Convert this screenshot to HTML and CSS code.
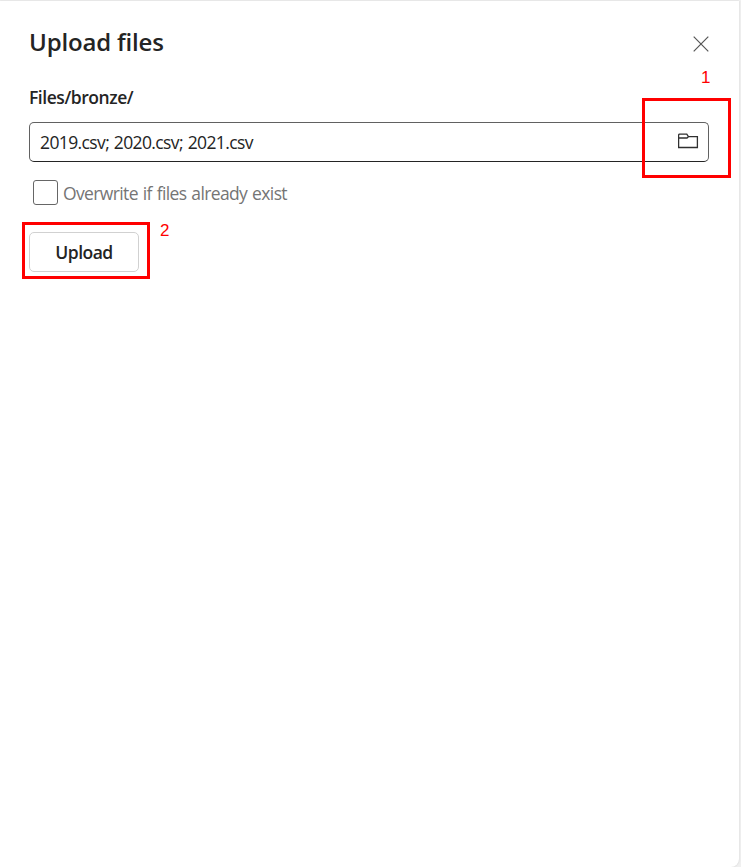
FILE: index.html
```html
<!DOCTYPE html>
<html lang="en">
<head>
<meta charset="utf-8">
<title>Upload files</title>
<link rel="stylesheet" href="styles.css">
</head>
<body>
<main class="panel">
  <header class="header">
    <h1 class="title">Upload files</h1>
    <button class="close" aria-label="Close">
      <svg width="16" height="16" viewBox="0 0 16 16"><path d="M.7.7l14.6 14.6M15.3.7L.7 15.3"/></svg>
    </button>
  </header>
  <div class="path"><span>Files/bronze/</span></div>
  <div class="field">
    <span class="value">2019.csv; 2020.csv; 2021.csv</span>
    <svg class="folder" width="21" height="16" viewBox="0 0 21 16"><path d="M.6 14.5V2.2Q.6 1.2 1.6 1.2H8.8L10.4 3.7H19.4V14.5zM.6 5H9L10.4 3.7"/></svg>
    <span class="mark mark-browse"></span>
    <span class="step step-browse">1</span>
  </div>
  <label class="option"><span class="box"></span><span class="option-text">Overwrite if files already exist</span></label>
  <div class="actions">
    <button class="upload"><span>Upload</span></button>
    <span class="mark mark-upload"></span>
    <span class="step step-upload">2</span>
  </div>
</main>
</body>
</html>
```

FILE: styles.css
```css
* { box-sizing: border-box; }
body {
  margin: 0;
  height: 867px;
  overflow: hidden;
  background: #f0f0f0;
  font-family: "Open Sans", "Noto Sans", sans-serif;
  color: #242424;
}
.panel {
  width: 739px;
  height: 866px;
  margin-top: 1px;
  padding: 21px 30px 0 29px;
  background: #fff;
  border-radius: 0 0 8px 0;
  box-shadow: 0 0 2px #ccc;
}
.header { display: flex; justify-content: space-between; height: 44px; }
.title { margin: 0; font-size: 24px; line-height: 40px; font-weight: 600; letter-spacing: -0.17px; white-space: nowrap; }
.close { width: 16px; height: 16px; margin: 14px 0 0; padding: 0; border: 0; background: none; }
.close svg { display: block; fill: none; stroke: #555; stroke-width: 1.2; }
.path { height: 56px; padding-top: 19px; font-size: 17.5px; line-height: 24px; font-weight: 600; letter-spacing: -0.45px; }
.field {
  position: relative;
  display: flex;
  align-items: center;
  justify-content: space-between;
  height: 40px;
  padding: 0 9px 0 10px;
  border: 1px solid #616161;
  border-bottom-color: #242424;
  border-radius: 5px;
  font-size: 17.5px;
}
.value { letter-spacing: -0.62px; word-spacing: 0.8px; }
.folder { margin-top: -3px; fill: none; stroke: #303030; stroke-width: 1.3; }
.mark { position: absolute; border: 3px solid #f00; }
.mark-browse { left: 612px; top: -25px; width: 89px; height: 80px; }
.step { position: absolute; color: #f00; font: 17px/20px "Liberation Sans", Arial, sans-serif; }
.step-browse { left: 671px; top: -55px; }
.option { display: flex; align-items: center; gap: 5px; height: 26px; margin: 17px 0 27px 4px; font-size: 17.5px; color: #757575; }
.box { width: 25px; height: 25px; border: 1px solid #666; border-radius: 3px; }
.option-text { padding-top: 2px; letter-spacing: -0.62px; word-spacing: 0.9px; }
.actions { position: relative; height: 40px; }
.upload {
  display: block;
  width: 110px;
  height: 40px;
  padding: 0;
  border: 1px solid #d1d1d1;
  border-radius: 5px;
  background: #fff;
  color: #242424;
  font: 600 17.5px/38px "Open Sans", "Noto Sans", sans-serif;
  letter-spacing: -0.5px;
}
.mark-upload { left: -7px; top: -10px; width: 128px; height: 57px; }
.step-upload { left: 131px; top: -11px; }
```
